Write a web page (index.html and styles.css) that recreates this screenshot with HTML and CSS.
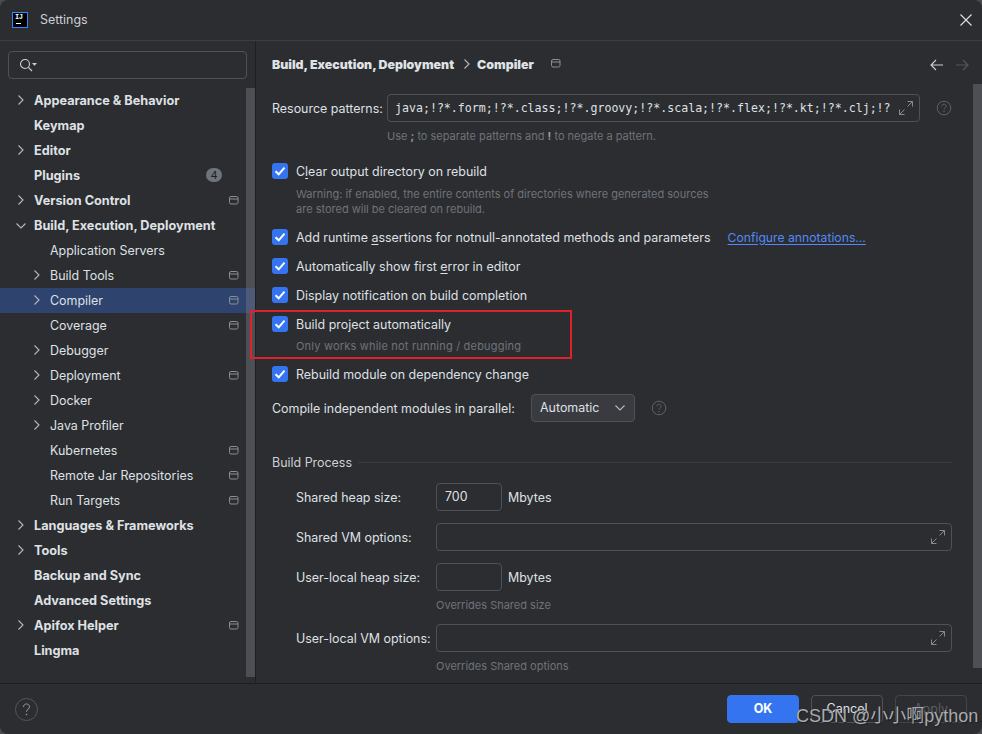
FILE: index.html
```html
<!DOCTYPE html>
<html lang="en">
<head>
  <meta charset="UTF-8" />
  <title>Settings</title>
  <link rel="stylesheet" href="styles.css">
</head>
<body>
  <svg class="defs" width="0" height="0">
    <symbol id="chev" viewBox="0 0 10 12"><path d="M2.500 1.500 7 6l-4.500 4.500" fill="none" stroke="currentColor" stroke-width="1.100"/></symbol>
    <symbol id="chevd" viewBox="0 0 12 10"><path d="M1.500 2.500 6 7l4.500-4.500" fill="none" stroke="currentColor" stroke-width="1.100"/></symbol>
    <symbol id="proj" viewBox="0 0 10 9"><rect x=".5" y=".5" width="8.500" height="7.500" rx="1.500" fill="none" stroke="currentColor"/><path d="M1 3h8" stroke="currentColor"/></symbol>
    <symbol id="check" viewBox="0 0 16 16"><path d="M3.500 8.300 6.700 11.300 12.500 4.700" fill="none" stroke="#fff" stroke-width="2"/></symbol>
    <symbol id="expand" viewBox="0 0 16 16"><path d="M9.500 1.500h5v5M14.500 1.500l-5 5M1.500 9.500v5h5M1.500 14.500l5-5" fill="none" stroke="currentColor" stroke-width="1"/></symbol>
    <symbol id="help" viewBox="0 0 16 16"><circle cx="8" cy="8" r="6.800" fill="none" stroke="currentColor"/><path d="M5.900 6.300c0-1.300 1-2.100 2.100-2.100s2.100.8 2.100 2c0 1.800-2.100 1.700-2.100 3.400" fill="none" stroke="currentColor"/><circle cx="8" cy="11.500" r=".7" fill="currentColor"/></symbol>
  </svg>

  <div class="window">
    <header class="titlebar">
      <div class="logo"><span>IJ</span><i></i></div>
      <div class="title">Settings</div>
      <svg class="close" width="12" height="12" viewBox="0 0 12 12"><path d="M.5.5l11 11M11.500.5l-11 11" stroke="#dfe1e5" stroke-width="1.100"/></svg>
    </header>

    <div class="body">
      <aside class="sidebar">
        <div class="search">
          <svg width="20" height="16" viewBox="0 0 20 16"><circle cx="7" cy="7" r="4.500" fill="none" stroke="#ced0d6" stroke-width="1.100"/><path d="M10.300 10.300 14 14" stroke="#ced0d6" stroke-width="1.100"/><path d="M14 6h5l-2.500 2.800z" fill="#ced0d6"/></svg>
        </div>
        <div class="tree-wrap">
          <ul class="tree">
            <li class="top"><svg class="arrow"><use href="#chev"/></svg>Appearance &amp; Behavior</li>
            <li class="top">Keymap</li>
            <li class="top"><svg class="arrow"><use href="#chev"/></svg>Editor</li>
            <li class="top">Plugins<span class="badge">4</span></li>
            <li class="top"><svg class="arrow"><use href="#chev"/></svg>Version Control<svg class="proj"><use href="#proj"/></svg></li>
            <li class="top"><svg class="arrow down"><use href="#chevd"/></svg>Build, Execution, Deployment</li>
            <li class="sub">Application Servers</li>
            <li class="sub"><svg class="arrow"><use href="#chev"/></svg>Build Tools<svg class="proj"><use href="#proj"/></svg></li>
            <li class="sub selected"><svg class="arrow"><use href="#chev"/></svg>Compiler<svg class="proj"><use href="#proj"/></svg></li>
            <li class="sub">Coverage<svg class="proj"><use href="#proj"/></svg></li>
            <li class="sub"><svg class="arrow"><use href="#chev"/></svg>Debugger</li>
            <li class="sub"><svg class="arrow"><use href="#chev"/></svg>Deployment<svg class="proj"><use href="#proj"/></svg></li>
            <li class="sub"><svg class="arrow"><use href="#chev"/></svg>Docker</li>
            <li class="sub"><svg class="arrow"><use href="#chev"/></svg>Java Profiler</li>
            <li class="sub">Kubernetes<svg class="proj"><use href="#proj"/></svg></li>
            <li class="sub">Remote Jar Repositories<svg class="proj"><use href="#proj"/></svg></li>
            <li class="sub">Run Targets<svg class="proj"><use href="#proj"/></svg></li>
            <li class="top"><svg class="arrow"><use href="#chev"/></svg>Languages &amp; Frameworks</li>
            <li class="top"><svg class="arrow"><use href="#chev"/></svg>Tools</li>
            <li class="top">Backup and Sync</li>
            <li class="top">Advanced Settings</li>
            <li class="top"><svg class="arrow"><use href="#chev"/></svg>Apifox Helper<svg class="proj"><use href="#proj"/></svg></li>
            <li class="top">Lingma</li>
          </ul>
          <div class="scrollbar side"></div>
        </div>
      </aside>

      <main class="panel">
        <div class="crumbs">
          <b>Build, Execution, Deployment</b>
          <svg class="crumb-arrow"><use href="#chev"/></svg>
          <b>Compiler</b>
          <svg class="crumb-proj"><use href="#proj"/></svg>
          <div class="nav-arrows">
            <svg width="14" height="12" viewBox="0 0 14 12"><path d="M1 6h12M6 1 1 6l5 5" fill="none" stroke="#ced0d6" stroke-width="1.100"/></svg>
            <svg width="14" height="12" viewBox="0 0 14 12"><path d="M1 6h12M8 1l5 5-5 5" fill="none" stroke="#55575c" stroke-width="1.100"/></svg>
          </div>
        </div>

        <div class="form">
          <div class="row resource">
            <label>Resource patterns:</label>
            <div class="input wide mono"><span>java;!?*.form;!?*.class;!?*.groovy;!?*.scala;!?*.flex;!?*.kt;!?*.clj;!?</span><svg class="expand"><use href="#expand"/></svg></div>
            <svg class="help"><use href="#help"/></svg>
          </div>
          <p class="hint hint-res">Use <b>;</b> to separate patterns and <b>!</b> to negate a pattern.</p>

          <div class="check first"><span class="box"><svg><use href="#check"/></svg></span><span>C<u>l</u>ear output directory on rebuild</span></div>
          <p class="note note-two">Warning: if enabled, the entire contents of directories where generated sources<br>are stored will be cleared on rebuild.</p>
          <div class="check c-runtime"><span class="box"><svg><use href="#check"/></svg></span><span>Add runtime <u>a</u>ssertions for notnull-annotated methods and parameters</span><a class="link">Configure annotations...</a></div>
          <div class="check c-next"><span class="box"><svg><use href="#check"/></svg></span><span>Automatically show first <u>e</u>rror in editor</span></div>
          <div class="check c-next"><span class="box"><svg><use href="#check"/></svg></span><span>Display notification on build completion</span></div>
          <div class="check c-next"><span class="box"><svg><use href="#check"/></svg></span><span>Build project automatically</span></div>
          <p class="note note-one">Only works while not running / debugging</p>
          <div class="check c-rebuild"><span class="box"><svg><use href="#check"/></svg></span><span>Rebuild module on dependency change</span></div>

          <div class="row compile">
            <label>Compile independent modules in parallel:</label>
            <div class="select">Automatic<svg class="sel-arrow"><use href="#chevd"/></svg></div>
            <svg class="help"><use href="#help"/></svg>
          </div>

          <div class="group"><span>Build Process</span><i></i></div>

          <div class="field f-first"><label>Shared heap size:</label><div class="input small">700</div><span class="unit">Mbytes</span></div>
          <div class="field"><label>Shared VM options:</label><div class="input long"><svg class="expand"><use href="#expand"/></svg></div></div>
          <div class="field"><label>User-local heap size:</label><div class="input small"></div><span class="unit">Mbytes</span></div>
          <p class="note field-note">Overrides Shared size</p>
          <div class="field f-last"><label>User-local VM options:</label><div class="input long"><svg class="expand"><use href="#expand"/></svg></div></div>
          <p class="note field-note">Overrides Shared options</p>
        </div>
        <div class="scrollbar main"></div>
      </main>
    </div>

    <footer class="footer">
      <svg class="foot-help" width="23" height="23" viewBox="0 0 23 23"><circle cx="11.500" cy="11.500" r="11" fill="none" stroke="#55575c"/><path d="M8.500 9c0-1.900 1.400-3 3-3s3 1.100 3 2.800c0 2.500-3 2.400-3 4.900" fill="none" stroke="#9a9da3"/><circle cx="11.500" cy="16.500" r=".8" fill="#9a9da3"/></svg>
      <div class="buttons">
        <button class="btn primary">OK</button>
        <button class="btn">Cancel</button>
        <button class="btn off">Apply</button>
      </div>
    </footer>
  </div>

  <div class="redbox"></div>
  <div class="watermark">CSDN @小小啊python</div>
</body>
</html>
```

FILE: styles.css
```css
* {
  box-sizing: border-box;
}
html, body {
  margin: 0;
  padding: 0;
  width: 982px;
  height: 734px;
  overflow: hidden;
  background: #4a4b4e;
}
body {
  position: relative;
  font-family: Inter, "Noto Sans", sans-serif;
  font-size: 12.450px;
  color: #dfe1e5;
}
.defs {
  position: absolute;
}
.window {
  width: 982px;
  height: 734px;
  display: flex;
  flex-direction: column;
  background: #2b2d30;
  border-radius: 8px;
  overflow: hidden;
}

/* title bar */
.titlebar {
  height: 41px;
  flex: none;
  display: flex;
  align-items: center;
  padding: 0 10px 1px 12px;
  border-bottom: 1px solid #3c3e42;
}
.logo {
  width: 16px;
  height: 16px;
  background: #000;
  border: 1px solid #2f8cff;
  margin-right: 12px;
  color: #fff;
  font: bold 7px/7px "Liberation Mono", monospace;
  padding: 1px 0 0 2px;
}
.logo span {
  display: block;
  letter-spacing: -0.5px;
}
.logo i {
  display: block;
  width: 5px;
  height: 1px;
  background: #fff;
  margin-top: 2px;
  margin-left: 1px;
}
.title {
  flex: 1;
  color: #ced0d6;
}
.close {
  display: block;
}

.body {
  flex: 1;
  min-height: 0;
  display: flex;
}

/* left tree */
.sidebar {
  width: 256px;
  flex: none;
  border-right: 1px solid #1e1f22;
  padding-top: 10px;
  display: flex;
  flex-direction: column;
}
.search {
  margin: 0 8px;
  height: 28px;
  width: 239px;
  border: 1px solid #4e5157;
  border-radius: 4px;
  display: flex;
  align-items: center;
  padding-left: 9px;
}
.tree-wrap {
  position: relative;
  flex: 1;
  margin-top: 9px;
}
.tree {
  list-style: none;
  margin: 0;
  padding: 0;
}
.tree li {
  height: 25px;
  display: flex;
  align-items: center;
  position: relative;
  color: #dfe1e5;
}
.tree .top {
  padding-left: 34px;
  font-weight: 700;
  font-size: 12.700px;
}
.tree .sub {
  padding-left: 50px;
}
.tree .selected {
  background: #2e436e;
}
.arrow {
  position: absolute;
  left: 16px;
  top: 6px;
  width: 10px;
  height: 12px;
  color: #b4b8bf;
}
.arrow.down {
  left: 15px;
  width: 12px;
  height: 10px;
  top: 8px;
}
.sub .arrow {
  left: 32px;
}
.proj {
  position: absolute;
  left: 229px;
  top: 8px;
  width: 10px;
  height: 9px;
  color: #8b8e94;
}
.badge {
  position: absolute;
  left: 206px;
  top: 5px;
  width: 16px;
  height: 14px;
  border-radius: 7px;
  background: #6f737a;
  color: #1e1f22;
  font-size: 11px;
  font-weight: 400;
  line-height: 14px;
  text-align: center;
}
.scrollbar {
  position: absolute;
  background: rgba(120, 122, 128, 0.45);
  width: 9px;
}
.scrollbar.side {
  left: 246px;
  top: 0;
  height: 589px;
}

/* right panel */
.panel {
  flex: 1;
  position: relative;
  padding-left: 16px;
}
.crumbs {
  display: flex;
  align-items: center;
  height: 26px;
  margin-top: 10px;
  font-size: 12.370px;
  font-weight: 700;
}
.crumb-arrow {
  width: 10px;
  height: 12px;
  margin: 0 5px 0 8px;
  color: #b4b8bf;
}
.crumb-proj {
  width: 10px;
  height: 9px;
  margin: 0 0 2px 17px;
  color: #8b8e94;
}
.nav-arrows {
  margin-left: auto;
  margin-right: 13px;
  display: flex;
  gap: 11px;
  padding-top: 2px;
}
.form {
  padding-top: 17px;
}
.row {
  display: flex;
  align-items: center;
}
.row label,
.field label {
  white-space: nowrap;
  flex: none;
}
.resource {
  height: 28px;
}
.resource label {
  width: 115px;
}
.input {
  height: 28px;
  border: 1px solid #4e5157;
  border-radius: 4px;
  position: relative;
  flex: none;
}
.wide {
  width: 533px;
}
.mono {
  font-family: "DejaVu Sans Mono", monospace;
  font-size: 11.600px;
  line-height: 26px;
  padding-left: 7px;
}
.mono span {
  display: block;
  width: 497px;
  overflow: hidden;
  white-space: nowrap;
}
.expand {
  position: absolute;
  right: 5px;
  top: 5px;
  width: 16px;
  height: 16px;
  color: #868a91;
}
.help {
  width: 16px;
  height: 16px;
  color: #5f6268;
}
.resource .help {
  margin-left: 16px;
}
.hint {
  margin: 6px 0 0 115px;
  line-height: 16px;
  font-size: 11px;
  color: #6f737a;
}
.hint b {
  color: #9a9da3;
}
.check {
  display: flex;
  align-items: center;
  height: 20px;
  white-space: nowrap;
}
.box {
  width: 16px;
  height: 16px;
  background: #3574f0;
  border-radius: 3px;
  margin-right: 8px;
  flex: none;
}
.box svg {
  display: block;
  width: 16px;
  height: 16px;
}
.first {
  margin-top: 17px;
}
.c-runtime {
  margin-top: 10px;
}
.c-next {
  margin-top: 9px;
}
.c-rebuild {
  margin-top: 10px;
}
.check u {
  text-underline-offset: 2px;
}
.link {
  margin-left: 17px;
  font-size: 12.200px;
  color: #548af7;
  text-decoration: underline;
  text-underline-offset: 2px;
}
.note {
  margin: 0 0 0 24px;
  font-size: 11px;
  line-height: 15px;
  color: #6f737a;
}
.note-two {
  margin-top: 6px;
}
.note-one {
  margin-top: 5px;
  letter-spacing: 0.2px;
}
.compile {
  margin-top: 10px;
  height: 28px;
}
.compile label {
  width: 259px;
}
.select {
  width: 104px;
  height: 28px;
  background: #393b40;
  border: 1px solid #4e5157;
  border-radius: 4px;
  padding-left: 8px;
  line-height: 26px;
  position: relative;
}
.sel-arrow {
  position: absolute;
  right: 8px;
  top: 8px;
  width: 12px;
  height: 10px;
  color: #b4b8bf;
}
.compile .help {
  margin-left: 16px;
}
.group {
  display: flex;
  align-items: center;
  margin-top: 30px;
  height: 20px;
  width: 680px;
  color: #ced0d6;
}
.group i {
  flex: 1;
  height: 1px;
  background: #393b40;
  margin-left: 6px;
  margin-top: 1px;
}
.field {
  display: flex;
  align-items: center;
  height: 28px;
  margin-top: 12px;
  padding-left: 24px;
}
.f-first {
  margin-top: 11px;
}
.field label {
  width: 140px;
}
.small {
  width: 66px;
  padding-left: 8px;
  line-height: 26px;
}
.long {
  width: 516px;
}
.unit {
  margin-left: 6px;
}
.field-note {
  margin: 7px 0 0 164px;
}
.f-last {
  margin-top: 11px;
}
.scrollbar.main {
  right: 0;
  top: 43px;
  height: 584px;
}

/* bottom buttons */
.footer {
  height: 51px;
  flex: none;
  border-top: 1px solid #1e1f22;
  display: flex;
  align-items: center;
  padding: 0 15px;
}
.buttons {
  margin-left: auto;
  display: flex;
  gap: 12px;
  margin-top: -1px;
}
.btn {
  width: 72px;
  height: 28px;
  background: none;
  border: 1px solid #4e5157;
  border-radius: 4px;
  color: #dfe1e5;
  font: 12.500px Inter, sans-serif;
  padding: 0;
}
.primary {
  background: #3574f0;
  border-color: #3574f0;
  color: #fff;
  font-weight: 700;
}
.off {
  color: #5a5d63;
  border-color: #43454a;
}

/* things painted on top of the screenshot */
.redbox {
  position: absolute;
  left: 250px;
  top: 310px;
  width: 322px;
  height: 49px;
  border: 2px solid #e0202a;
}
.watermark {
  position: absolute;
  left: 796px;
  top: 705px;
  font-family: "Liberation Sans", "Noto Sans CJK SC", sans-serif;
  font-size: 18px;
  line-height: 22px;
  color: #a9abae;
  text-shadow: 1px 1px 1px #1e1f22;
  white-space: nowrap;
}
```
